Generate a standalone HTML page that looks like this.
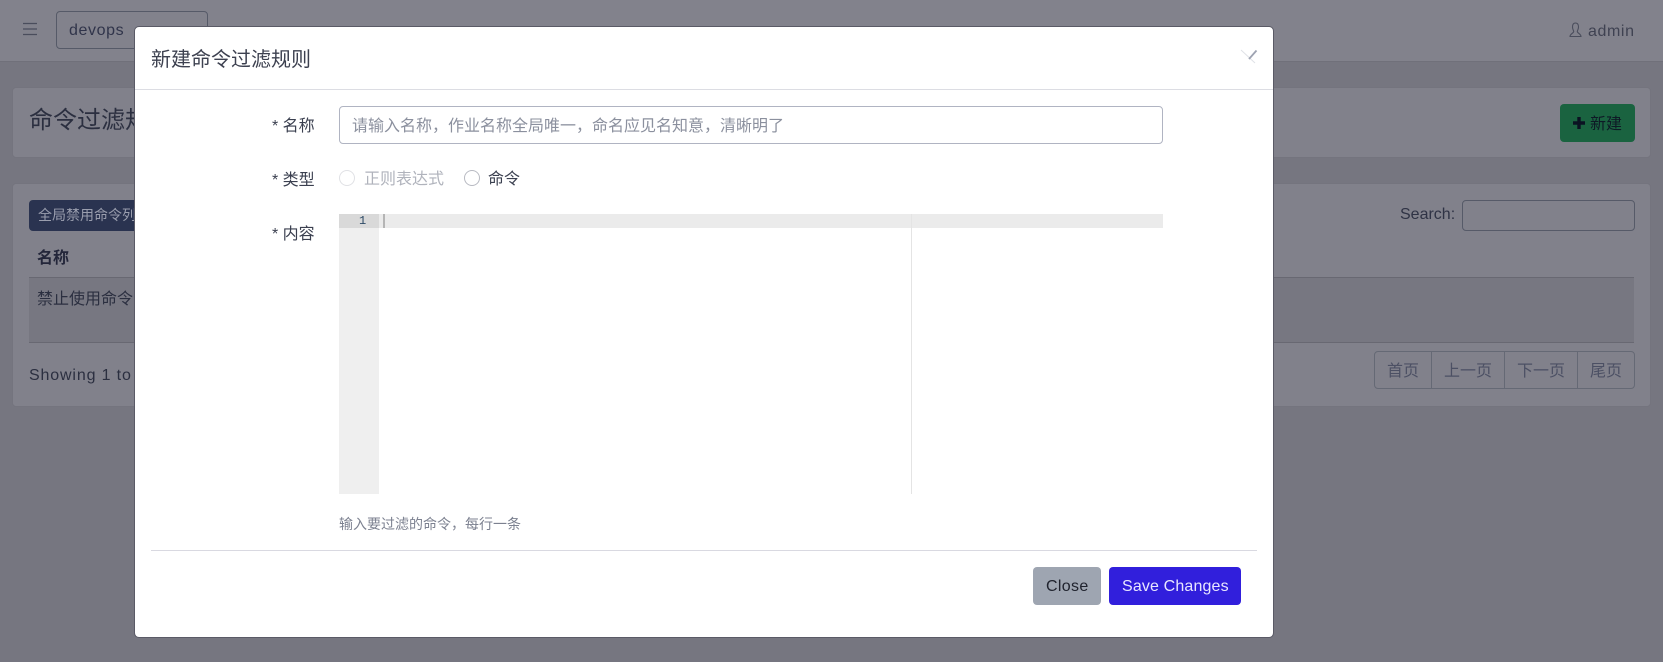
<!DOCTYPE html>
<html><head><meta charset="utf-8"><style>
html,body{margin:0;padding:0;width:1663px;height:662px;overflow:hidden;background:#767680}
body{position:relative;font-family:"Liberation Sans","Noto Sans CJK SC",sans-serif;font-size:16px;color:#2b2f40}
div,span.t{position:absolute;box-sizing:border-box}
.t{white-space:nowrap;line-height:24px}
.card{background:#81818b;border:1px solid #74747e;border-radius:4px}
.m{color:#3a3f4f}
</style></head><body>
<!-- background page -->
<div style="left:0;top:0;width:1663px;height:62px;background:#82828c;border-bottom:1px solid #70707a"></div>
<svg style="position:absolute;left:22px;top:22px" width="16" height="14" viewBox="0 0 16 14"><path d="M1 1.500H15M1 7H15M1 12.500H15" stroke="#4a4d5c" stroke-width="1.200" fill="none"/></svg>
<div style="left:56px;top:11px;width:152px;height:38px;border:1px solid #565a68;border-radius:4px"></div>
<div class="t" style="left:69px;top:19px;color:#30344a;letter-spacing:.6px">devops</div>
<svg style="position:absolute;left:1568px;top:22px" width="15" height="16" viewBox="0 0 15 16"><path d="M7.500 1C5.300 1 4.500 2.800 4.500 5c0 2 1 3.300 1.200 4.500C5.800 11 2 11.800 2 14.500H13C13 11.800 9.200 11 9.300 9.500 9.500 8.300 10.500 7 10.500 5 10.500 2.800 9.700 1 7.500 1Z" stroke="#4a4d5c" stroke-width="1.100" fill="none"/></svg>
<div class="t" style="left:1588px;top:20px;color:#3f4252;letter-spacing:.6px">admin</div>

<div class="card" style="left:12px;top:87px;width:1639px;height:71px"></div>
<div class="t" style="left:29px;top:106px;font-size:24px;line-height:30px;color:#2b2f40">命令过滤规则</div>
<div style="left:1560px;top:104px;width:75px;height:38px;background:#1a6340;border-radius:4px"></div>
<svg style="position:absolute;left:1572px;top:116px" width="14" height="14" viewBox="0 0 14 14"><path d="M7 1V13M1 7H13" stroke="#0b1222" stroke-width="3.400" fill="none"/></svg>
<div class="t" style="left:1590px;top:113px;color:#0e1a26">新建</div>

<div class="card" style="left:12px;top:183px;width:1639px;height:224px"></div>
<div style="left:29px;top:200px;width:120px;height:31px;background:#2a3350;border-radius:4px"></div>
<div class="t" style="left:38px;top:203px;font-size:14px;color:#9a9eae">全局禁用命令列表</div>
<div class="t" style="left:1400px;top:203px;color:#2f3345">Search:</div>
<div style="left:1462px;top:200px;width:173px;height:31px;border:1px solid #565a68;border-radius:4px"></div>
<div class="t" style="left:37px;top:247px;font-weight:700;color:#23263a">名称</div>
<div style="left:29px;top:277px;width:1605px;height:66px;background:#777781;border-top:1px solid #686872;border-bottom:1px solid #686872"></div>
<div class="t" style="left:37px;top:288px;color:#2b2f40">禁止使用命令</div>
<div class="t" style="left:29px;top:364px;letter-spacing:.85px;color:#2b2f40">Showing 1 to 1 of 1 entries</div>
<div style="left:1374px;top:351px;width:261px;height:38px;border:1px solid #656975;border-radius:4px"></div>
<div style="left:1431px;top:351px;width:1px;height:38px;background:#656975"></div>
<div style="left:1504px;top:351px;width:1px;height:38px;background:#656975"></div>
<div style="left:1577px;top:351px;width:1px;height:38px;background:#656975"></div>
<div class="t" style="left:1387px;top:360px;color:#4c5064">首页</div>
<div class="t" style="left:1444px;top:360px;color:#4c5064">上一页</div>
<div class="t" style="left:1517px;top:360px;color:#4c5064">下一页</div>
<div class="t" style="left:1590px;top:360px;color:#4c5064">尾页</div>

<!-- modal -->
<div style="left:134px;top:26px;width:1140px;height:612px;background:#fff;border:1px solid #5a5a66;border-radius:5px"></div>
<div class="t" style="left:151px;top:45px;font-size:20px;line-height:30px;color:#3d4150">新建命令过滤规则</div>
<svg style="position:absolute;left:1238px;top:46px" width="22" height="20" viewBox="0 0 22 20"><path d="M3 4L17 17" stroke="#dfe1e6" stroke-width="1" fill="none"/><path d="M18.500 4.500L11 13" stroke="#9ea3b2" stroke-width="1.800" fill="none"/></svg>
<div style="left:135px;top:89px;width:1138px;height:1px;background:#dcdde3"></div>

<div class="t m" style="left:272px;top:115px">* 名称</div>
<div style="left:339px;top:106px;width:824px;height:38px;border:1px solid #b0b4c2;border-radius:4px"></div>
<div class="t" style="left:352px;top:115px;color:#8b909e">请输入名称，作业名称全局唯一，命名应见名知意，清晰明了</div>

<div class="t m" style="left:272px;top:169px">* 类型</div>
<div style="left:339px;top:170px;width:16px;height:16px;border:1px solid #e0e1e5;border-radius:50%"></div>
<div class="t" style="left:364px;top:168px;color:#b0b3bc">正则表达式</div>
<div style="left:464px;top:170px;width:16px;height:16px;border:1px solid #b8bac2;border-radius:50%"></div>
<div class="t m" style="left:488px;top:168px">命令</div>

<div class="t m" style="left:272px;top:223px">* 内容</div>
<div style="left:339px;top:214px;width:40px;height:280px;background:#efefef"></div>
<div style="left:339px;top:214px;width:40px;height:14px;background:#d9d9d9"></div>
<div style="left:379px;top:214px;width:784px;height:14px;background:#ebebeb"></div>
<div style="left:911px;top:214px;width:1px;height:280px;background:#e4e4e4"></div>
<div style="left:383px;top:214px;width:2px;height:14px;background:#b5b5b5"></div>
<div class="t" style="left:359px;top:214px;font-family:'Liberation Mono',monospace;font-size:12px;line-height:14px;color:#2d4a66">1</div>

<div class="t" style="left:339px;top:512px;font-size:14px;color:#7c8190">输入要过滤的命令，每行一条</div>
<div style="left:151px;top:550px;width:1106px;height:1px;background:#d9d9e1"></div>
<div style="left:1033px;top:567px;width:68px;height:38px;background:#9ea5b1;border-radius:4px"></div>
<div class="t" style="left:1046px;top:575px;color:#20232e;letter-spacing:.35px">Close</div>
<div style="left:1109px;top:567px;width:132px;height:38px;background:#311fdc;border-radius:4px"></div>
<div class="t" style="left:1122px;top:575px;color:#e8e6ff;letter-spacing:.15px">Save Changes</div>
</body></html>
